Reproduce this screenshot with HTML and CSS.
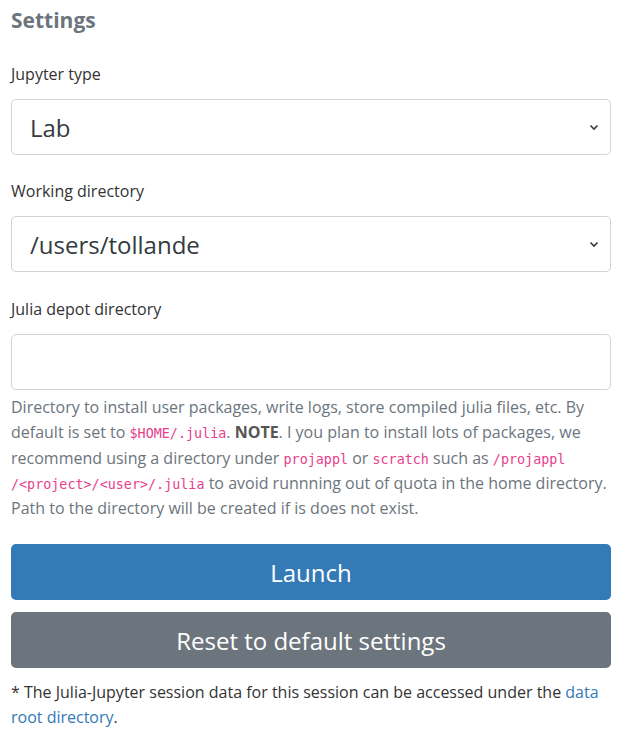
FILE: index.html
```html
<!DOCTYPE html>
<html>
<head>
<meta charset="utf-8">
<link rel="stylesheet" href="styles.css">
</head>
<body>
<div class="page">
  <h2 class="title">Settings</h2>
  <div class="field first">
    <label class="label">Jupyter type</label>
    <div class="select">
      <span>Lab</span>
      <svg class="chev" width="10" height="7" viewBox="0 0 10 7"><path d="M1.5 1.5 L5 5 L8.5 1.5" fill="none" stroke="#343a40" stroke-width="1.6"/></svg>
    </div>
  </div>
  <div class="field">
    <label class="label">Working directory</label>
    <div class="select">
      <span>/users/tollande</span>
      <svg class="chev" width="10" height="7" viewBox="0 0 10 7"><path d="M1.5 1.5 L5 5 L8.5 1.5" fill="none" stroke="#343a40" stroke-width="1.6"/></svg>
    </div>
  </div>
  <div class="field depot">
    <label class="label">Julia depot directory</label>
    <div class="input"></div>
    <p class="help">Directory to install user packages, write logs, store compiled julia files, etc. By default is set to <code>$HOME/.julia</code>. <b>NOTE</b>. I you plan to install lots of packages, we recommend using a directory under <code>projappl</code> or <code>scratch</code> such as <code>/projappl /&lt;project&gt;/&lt;user&gt;/.julia</code> to avoid runnning out of quota in the home directory. Path to the directory will be created if is does not exist.</p>
  </div>
  <div class="buttons">
    <button class="btn primary">Launch</button>
    <button class="btn secondary">Reset to default settings</button>
  </div>
  <p class="note">* The Julia-Jupyter session data for this session can be accessed under the <a href="#">data root directory</a>.</p>
</div>
</body>
</html>
```
FILE: styles.css
```css
html, body { margin: 0; padding: 0; background: #fff; }
body {
  font-family: "Open Sans", "Noto Sans", sans-serif;
  color: #333;
  font-size: 16px;
}
.page {
  width: 600px;
  padding: 7px 0 0 11px;
}
.title {
  margin: 0;
  font-size: 21px;
  font-weight: 700;
  color: #6c757d;
  line-height: 26px;
}
.field { margin-top: 25px; }
.field.first { margin-top: 30px; }
.field.depot { margin-top: 26px; }
.label {
  display: block;
  font-size: 16px;
  line-height: 22px;
  margin-bottom: 14px;
  color: #333;
}
.select, .input {
  box-sizing: border-box;
  height: 56px;
  border: 1px solid #ced4da;
  border-radius: 5px;
  background: #fff;
  display: flex;
  align-items: center;
  justify-content: space-between;
  padding: 0 11px 0 18px;
  font-size: 24px;
  color: #343a40;
}
.chev { display: block; }
.help {
  margin: 5px 0 0 0;
  font-size: 16px;
  line-height: 25.3px;
  color: #6c757d;
}
code {
  font-family: "DejaVu Sans Mono", "Liberation Mono", monospace;
  font-size: 13.4px;
  line-height: 1;
  color: #e83e8c;
}
.help b { color: #555; font-weight: 700; }
.buttons {
  margin-top: 23px;
  display: flex;
  flex-direction: column;
  gap: 12px;
}
.btn {
  height: 56px;
  border: none;
  border-radius: 5px;
  font-family: inherit;
  font-size: 24px;
  color: #fff;
  cursor: pointer;
}
.primary { background: #337ab7; }
.secondary { background: #6c757d; }
.note {
  margin: 12px 0 0 0;
  line-height: 25px;
  font-size: 16px;
  color: #333;
}
.note a { color: #337ab7; text-decoration: none; }
```
